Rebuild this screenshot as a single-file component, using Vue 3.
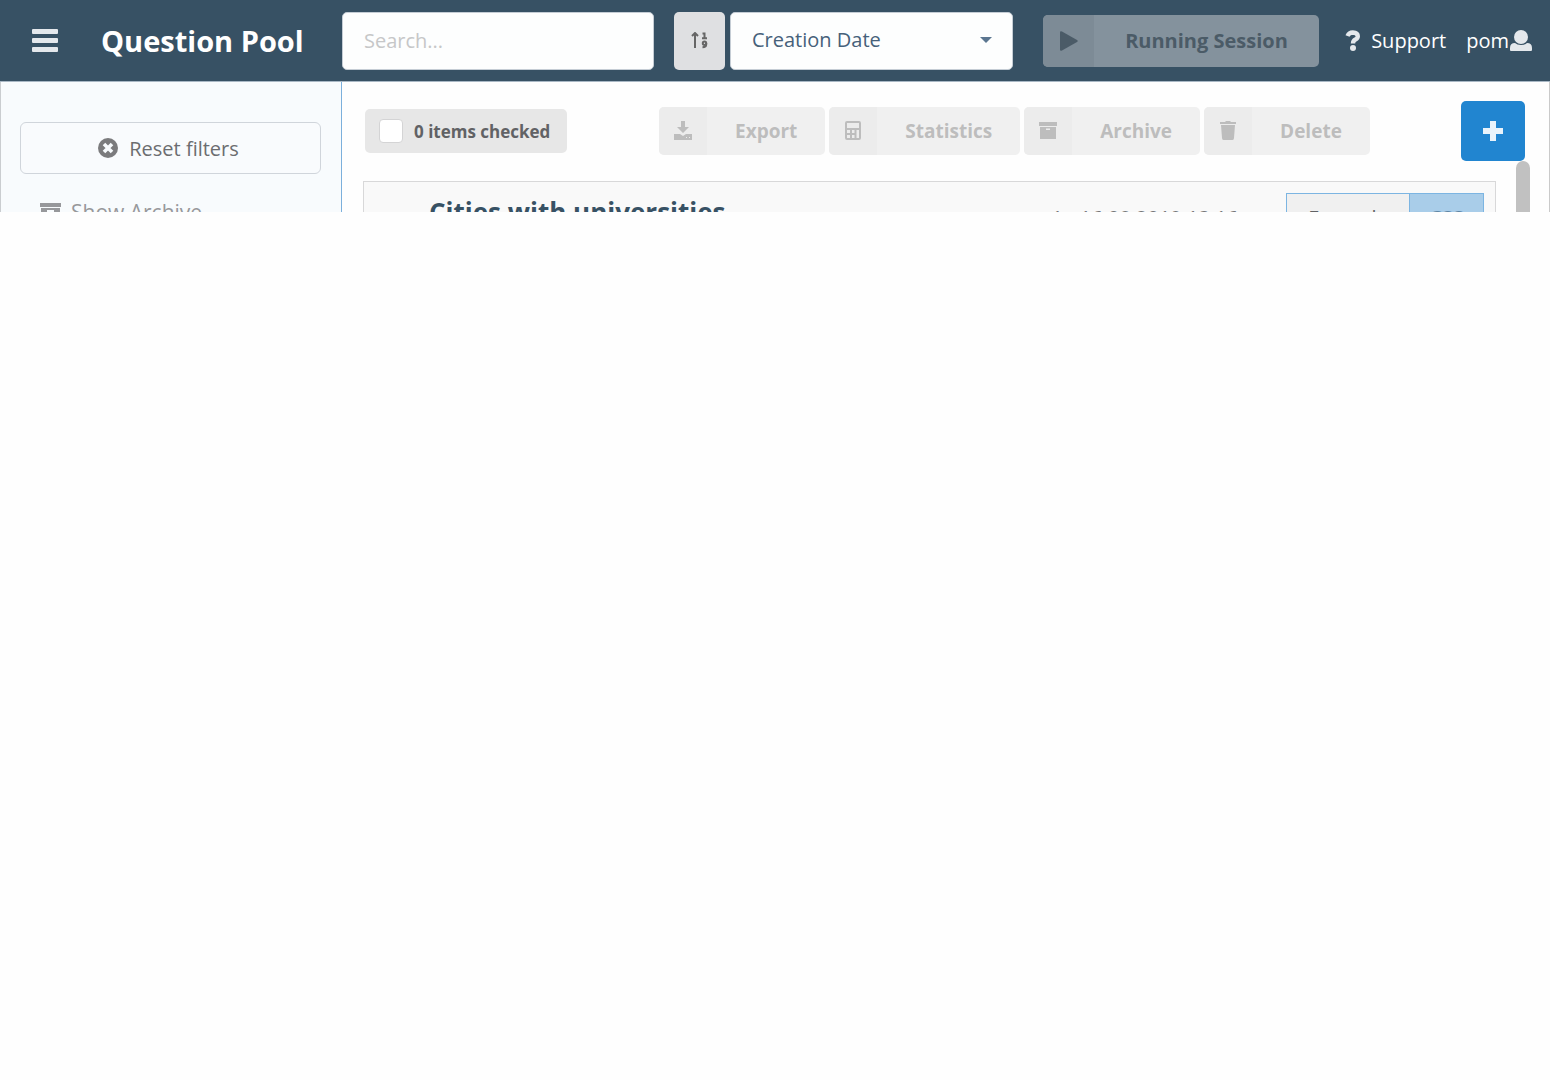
<script setup>
const actions = [
  { label: 'Export', icon: 'export' },
  { label: 'Statistics', icon: 'stats' },
  { label: 'Archive', icon: 'archive' },
  { label: 'Delete', icon: 'trash' }
]
</script>

<template>
  <div class="app">
    <header class="topbar">
      <button class="menu" type="button" aria-label="Menu">
        <svg viewBox="0 0 26 24" width="26" height="24" fill="#e4e8ec">
          <rect width="26" height="5" rx="1" /><rect y="9" width="26" height="5" rx="1" /><rect y="18" width="26" height="5" rx="1" />
        </svg>
      </button>
      <h1>Question Pool</h1>
      <input class="search" type="search" placeholder="Search..." aria-label="Search" />
      <button class="sort" type="button" aria-label="Sort order">
        <svg viewBox="0 0 18 18" width="18" height="18" fill="none" stroke="#666">
          <path d="M4 16V1M1 4l3-3 3 3" stroke-width="2" />
          <path d="M11.500 1.500h2V6M11 6.200h5" stroke-width="2" />
          <circle cx="13.500" cy="11.300" r="1.700" stroke-width="2" />
          <path d="M15.200 11v1.500q0 2.800-3.700 2.800" stroke-width="2" />
        </svg>
      </button>
      <div class="select-wrap">
        <select aria-label="Sort by">
          <option>Creation Date</option>
        </select>
        <svg class="caret" viewBox="0 0 12 6" width="12" height="6" fill="#5b7690"><path d="M0 0h12L6 6z" /></svg>
      </div>
      <button class="session" type="button" disabled>
        <span class="session-icon">
          <svg viewBox="0 0 18 20" width="18" height="20" fill="#4b5b67"><path d="M0 1.500Q0-.500 2 .500L17 9q1.500 1 0 2L2 19.500Q0 20.500 0 18.500z" /></svg>
        </span>
        <span class="session-text">Running Session</span>
      </button>
      <nav class="links">
        <a class="support" href="#">
          <svg viewBox="0 0 16 22" width="16" height="22"><path d="M2.500 6Q4 2.500 7.800 2.500q5 .2 5 3.800 0 2-2.400 3.200Q8 10.700 8 13.500" fill="none" stroke="#e4e8ec" stroke-width="4.400" /><circle cx="8" cy="18" r="3" fill="#e4e8ec" /></svg>
          Support
        </a>
        <a class="user" href="#">pom<svg viewBox="0 0 22 22" width="22" height="22" fill="#e4e8ec"><ellipse cx="11" cy="7" rx="7" ry="7" /><path d="M1 21q-1 0-1-1v-2q0-5 5-5 2 2 6 2t6-2q5 0 5 5v2q0 1-1 1z" /></svg></a>
      </nav>
    </header>

    <div class="body">
      <aside class="sidebar">
        <button class="reset" type="button">
          <svg viewBox="0 0 20 20" width="20" height="20"><circle cx="10" cy="10" r="10" fill="#7b7b7d" /><path d="M6 6l8 8M14 6l-8 8" stroke="#f8fbfd" stroke-width="3.600" /></svg>
          Reset filters
        </button>
        <a class="show-archive" href="#">
          <svg viewBox="0 0 21 20" width="21" height="20" fill="#97989b"><path d="M0 1h21v4H0z" /><path fill-rule="evenodd" d="M1 6h19v14H1zM7 8v2h7V8z" /></svg>
          Show Archive
        </a>
      </aside>

      <main class="content">
        <div class="toolbar">
          <label class="checked"><input type="checkbox" />0 items checked</label>
          <div class="actions">
            <button v-for="a in actions" :key="a.label" class="action" type="button" disabled>
              <span class="action-icon">
                <svg v-if="a.icon === 'export'" viewBox="0 0 20 20" width="20" height="20" fill="#bdbdbd"><path d="M8 0h4v6h4l-6 6-6-6h4z" /><path fill-rule="evenodd" d="M1 13h6l3 2 3-2h6v6H1zM13 16v1h1v-1zM16 16v1h1v-1z" /></svg>
                <svg v-else-if="a.icon === 'stats'" viewBox="0 0 20 20" width="20" height="20" fill="none" stroke="#bdbdbd" stroke-width="2"><rect x="3" y="1" width="14" height="17" rx="1" /><path d="M3 8h14M8 8v10M12.500 8v10M3 13h9.500" /></svg>
                <svg v-else-if="a.icon === 'archive'" viewBox="0 0 20 20" width="20" height="20" fill="#bdbdbd"><path d="M1 1h18v4H1z" /><path fill-rule="evenodd" d="M2 6h16v12H2zM8 7.500V9h4V7.500z" /></svg>
                <svg v-else viewBox="0 0 20 20" width="20" height="20" fill="#bdbdbd"><path d="M2 1h5l1-1h4l1 1h5v2H2zM3 4h14l-1 13q0 2-1.500 2h-9Q4 19 4 17z" /></svg>
              </span>
              <span class="action-text">{{ a.label }}</span>
            </button>
          </div>
          <button class="add" type="button" aria-label="Add question">
            <svg viewBox="0 0 20 20" width="20" height="20" fill="#e9f3fb"><path d="M7 0h6v7h7v6h-7v7H7v-7H0V7h7z" /></svg>
          </button>
        </div>
        <div class="list">
          <article class="question">
            <h2>Cities with universities</h2>
            <span class="date">v1 - 16.08.2019 13:16</span>
            <div class="tags">
              <a class="tag" href="#">Example</a>
              <a class="tag active" href="#">CSS</a>
            </div>
          </article>
          <div class="scrollbar"></div>
        </div>
      </main>
    </div>
  </div>
</template>

<style>
body { margin: 0; background: #fefefe; }
</style>

<style scoped>
* { box-sizing: border-box; }
.app {
  font-family: "Open Sans", "Noto Sans", sans-serif;
  font-size: 20px;
  color: #616265;
  height: 212px;
  overflow: hidden;
  display: flex;
  flex-direction: column;
}
button, input, select { font: inherit; color: inherit; margin: 0; border: 0; }
button { padding: 0; display: flex; align-items: center; }
a { color: inherit; text-decoration: none; }
svg { display: block; flex: none; }

.topbar {
  flex: none;
  height: 82px;
  display: flex;
  align-items: center;
  background: #375164;
  border-bottom: 1px solid #a9b8c5;
  padding: 0 18px 0 32px;
}
.menu { background: none; }
h1 { margin: 0 0 0 43px; width: 241px; font-size: 29px; line-height: 40px; font-weight: 700; color: #fff; flex: none; white-space: nowrap; }
.search {
  width: 312px; height: 58px; padding: 0 21px; border-radius: 5px;
  background: #fdfefe; border: 1px solid #c5cdd5; appearance: none;
}
.search::placeholder { color: #c6c7c8; opacity: 1; }
.sort { margin-left: 20px; width: 51px; height: 58px; justify-content: center; background: #dfe0e2; border-radius: 5px; }
.select-wrap { margin-left: 5px; width: 283px; position: relative; }
select {
  display: block; width: 100%; height: 58px; padding: 0 21px 2px; border-radius: 5px;
  background: #fdfefe; border: 1px solid #c5cdd5; color: #46617a; appearance: none;
}
.caret { position: absolute; right: 21px; top: 25px; pointer-events: none; }
.session { margin-left: 30px; width: 276px; height: 52px; border-radius: 5px; background: #84929d; color: #4b5b67; font-weight: 700; overflow: hidden; }
.session-icon { width: 51px; height: 100%; background: #7d8b96; display: flex; align-items: center; justify-content: center; }
.session-text { flex: 1; text-align: center; }
.links { display: flex; margin-left: auto; gap: 20px; color: #fff; }
.links a { display: flex; align-items: center; }
.support { gap: 10px; }
.user { gap: 1px; }

.body { display: flex; flex: 1; }
.sidebar { width: 342px; flex: none; background: #f8fbfd; border-left: 1px solid #cacdd0; border-right: 1px solid #7cb0dc; padding: 40px 20px 0 19px; }
.reset { width: 100%; height: 52px; padding-right: 4px; justify-content: center; gap: 11px; background: #f9fbfd; border: 1px solid #d0d5db; border-radius: 6px; color: #6c6d70; }
.show-archive { display: flex; align-items: center; gap: 10px; margin: 24px 0 0 20px; font-size: 21px; line-height: 28px; color: #97989b; }
.content { flex: 1; min-width: 0; border-right: 1px solid #cacaca; padding: 19px 19px 0 21px; }
.toolbar { display: flex; align-items: center; height: 60px; padding: 0 5px 0 2px; font-size: 19px; font-weight: 700; }
.checked { display: flex; align-items: center; gap: 11px; width: 202px; height: 44px; padding-left: 14px; background: #e7e7e7; border-radius: 5px; font-size: 17px; white-space: nowrap; }
.checked input { appearance: none; width: 24px; height: 24px; border: 1px solid #d4d4d5; border-radius: 4px; background: #fff; }
.actions { display: flex; gap: 4px; margin-left: 92px; }
.action { height: 48px; border-radius: 5px; background: #f0f0f0; color: #bdbdbd; overflow: hidden; }
.action-icon { width: 48px; height: 100%; background: #ececec; display: flex; align-items: center; justify-content: center; }
.action-text { padding: 0 28px; }
.add { margin-left: auto; width: 64px; height: 60px; background: #2185d0; border-radius: 5px; justify-content: center; }
.list { display: flex; justify-content: space-between; }
.question { flex: 1; display: flex; align-items: flex-start; margin: 20px 20px 0 0; height: 120px; border: 1px solid #d8d8d9; background: #f9f9f9; padding: 11px 11px 0 65px; }
h2 { margin: 0; font-size: 26px; line-height: 38px; color: #375164; }
.date { margin-left: auto; line-height: 50px; color: #77787a; }
.tags { display: flex; margin-left: 48px; border: 1px solid #7cb5e2; line-height: 48px; text-align: center; }
.tag { width: 122px; background: #f0f0f0; }
.tag.active { width: 74px; background: #a9cde9; color: #5f87a6; border-left: 1px solid #7cb5e2; }
.scrollbar { width: 14px; height: 140px; border-radius: 7px 7px 0 0; background: #c1c1c1; }
</style>
